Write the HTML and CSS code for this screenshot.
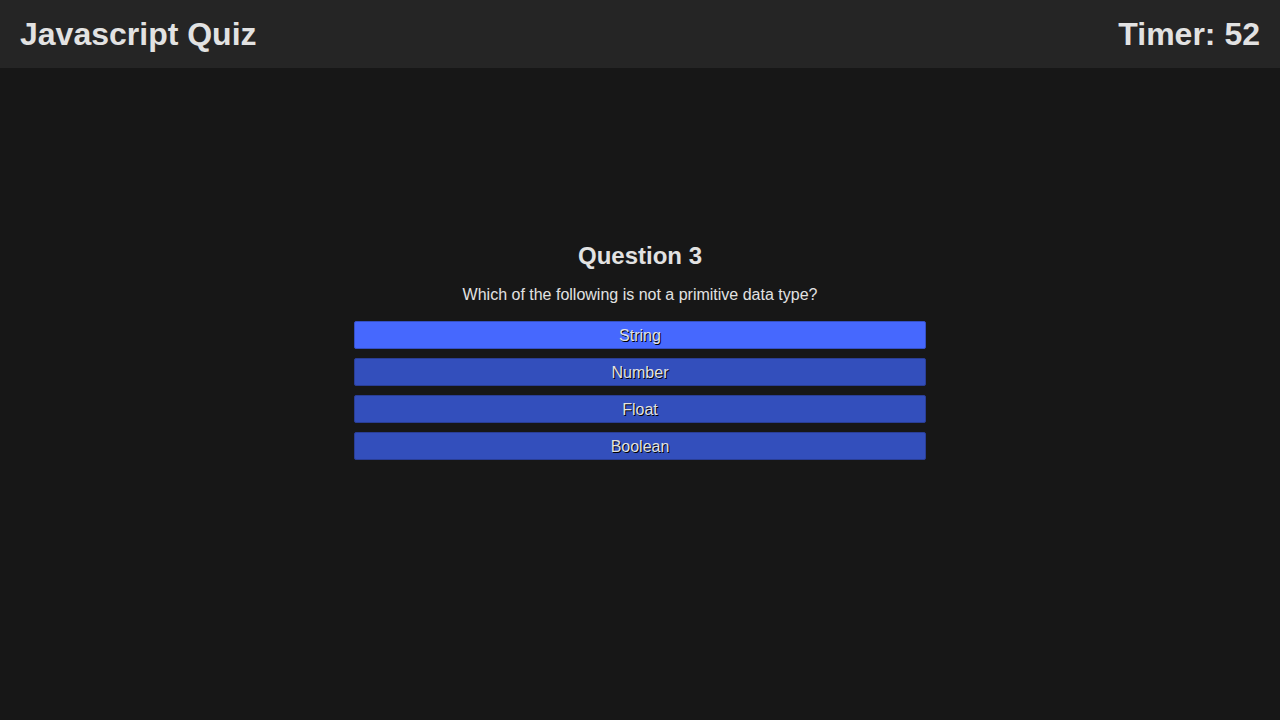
FILE: index.html
```html
<!DOCTYPE html>
<html>
<head>
<meta charset="utf-8">
<link rel="stylesheet" href="styles.css">
</head>
<body>
<header class="topbar">
  <h1 class="title">Javascript Quiz</h1>
  <div class="timer">Timer: 52</div>
</header>
<main class="main">
  <section class="quiz">
    <h2 class="q-title">Question 3</h2>
    <p class="q-text">Which of the following is not a primitive data type?</p>
    <div class="answers">
      <button class="answer active">String</button>
      <button class="answer">Number</button>
      <button class="answer">Float</button>
      <button class="answer">Boolean</button>
    </div>
  </section>
</main>
</body>
</html>
```

FILE: styles.css
```css
* { box-sizing: border-box; }
html, body { margin: 0; padding: 0; }
body {
  background: #171717;
  color: #e2e2e2;
  font-family: "Liberation Sans", Arial, sans-serif;
  height: 720px;
}
.topbar {
  height: 68px;
  background: #252525;
  display: flex;
  align-items: center;
  justify-content: space-between;
  padding: 0 20px;
}
.title, .timer {
  margin: 0;
  font-size: 32px;
  font-weight: bold;
  color: #e2e2e2;
}
.main {
  display: flex;
  justify-content: center;
  padding-top: 174px;
}
.quiz {
  width: 572px;
  display: flex;
  flex-direction: column;
  align-items: center;
}
.q-title {
  margin: 0;
  font-size: 24px;
  font-weight: bold;
  line-height: 28px;
}
.q-text {
  margin: 15px 0 0;
  font-size: 16px;
  line-height: 20px;
}
.answers {
  margin-top: 16px;
  width: 100%;
  display: flex;
  flex-direction: column;
  gap: 9px;
}
.answer {
  height: 28px;
  width: 100%;
  background: #334fbc;
  border: 1px solid #2a3e95;
  border-radius: 2px;
  color: #e2e2e2;
  font-family: "Liberation Sans", Arial, sans-serif;
  font-size: 16px;
  text-shadow: 1px 1px 0 #000;
  padding: 1px 0 0;
  cursor: pointer;
}
.answer.active {
  background: #4668fe;
  border-color: #3550c4;
}
```
